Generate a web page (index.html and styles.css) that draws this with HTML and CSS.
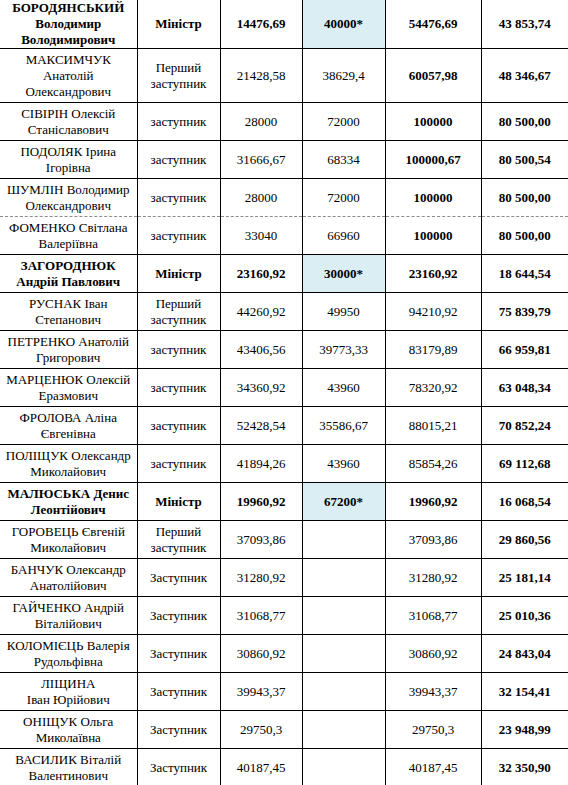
FILE: index.html
```html
<!DOCTYPE html>
<html lang="uk">
<head>
<meta charset="utf-8">
<title>Таблиця</title>
<link rel="stylesheet" href="styles.css">
</head>
<body class="page">
<table class="sal">
<colgroup>
<col class="c1"><col class="c2"><col class="c3"><col class="c4"><col class="c5"><col class="c6">
</colgroup>
<tbody>
<tr class="r-first min">
<td>БОРОДЯНСЬКИЙ Володимир Володимирович</td><td>Міністр</td><td>14476,69</td><td class="hl">40000*</td><td>54476,69</td><td>43 853,74</td>
</tr>
<tr class="r-tall">
<td>МАКСИМЧУК Анатолій Олександрович</td><td>Перший заступник</td><td>21428,58</td><td>38629,4</td><td class="b">60057,98</td><td>48 346,67</td>
</tr>
<tr>
<td>СІВІРІН Олексій Станіславович</td><td>заступник</td><td>28000</td><td>72000</td><td class="b">100000</td><td>80 500,00</td>
</tr>
<tr>
<td>ПОДОЛЯК Ірина Ігорівна</td><td>заступник</td><td>31666,67</td><td>68334</td><td class="b">100000,67</td><td>80 500,54</td>
</tr>
<tr class="dash">
<td>ШУМЛІН Володимир Олександрович</td><td>заступник</td><td>28000</td><td>72000</td><td class="b">100000</td><td>80 500,00</td>
</tr>
<tr class="after-dash">
<td>ФОМЕНКО Світлана Валеріївна</td><td>заступник</td><td>33040</td><td>66960</td><td class="b">100000</td><td>80 500,00</td>
</tr>
<tr class="min">
<td>ЗАГОРОДНЮК Андрій Павлович</td><td>Міністр</td><td>23160,92</td><td class="hl">30000*</td><td>23160,92</td><td>18 644,54</td>
</tr>
<tr>
<td>РУСНАК Іван Степанович</td><td>Перший заступник</td><td>44260,92</td><td>49950</td><td>94210,92</td><td>75 839,79</td>
</tr>
<tr>
<td>ПЕТРЕНКО Анатолій Григорович</td><td>заступник</td><td>43406,56</td><td>39773,33</td><td>83179,89</td><td>66 959,81</td>
</tr>
<tr>
<td>МАРЦЕНЮК Олексій Еразмович</td><td>заступник</td><td>34360,92</td><td>43960</td><td>78320,92</td><td>63 048,34</td>
</tr>
<tr>
<td>ФРОЛОВА Аліна Євгенівна</td><td>заступник</td><td>52428,54</td><td>35586,67</td><td>88015,21</td><td>70 852,24</td>
</tr>
<tr>
<td>ПОЛІЩУК Олександр Миколайович</td><td>заступник</td><td>41894,26</td><td>43960</td><td>85854,26</td><td>69 112,68</td>
</tr>
<tr class="min">
<td>МАЛЮСЬКА Денис Леонтійович</td><td>Міністр</td><td>19960,92</td><td class="hl">67200*</td><td>19960,92</td><td>16 068,54</td>
</tr>
<tr>
<td>ГОРОВЕЦЬ Євгеній Миколайович</td><td>Перший заступник</td><td>37093,86</td><td></td><td>37093,86</td><td>29 860,56</td>
</tr>
<tr>
<td>БАНЧУК Олександр Анатолійович</td><td>Заступник</td><td>31280,92</td><td></td><td>31280,92</td><td>25 181,14</td>
</tr>
<tr>
<td>ГАЙЧЕНКО Андрій Віталійович</td><td>Заступник</td><td>31068,77</td><td></td><td>31068,77</td><td>25 010,36</td>
</tr>
<tr>
<td>КОЛОМІЄЦЬ Валерія Рудольфівна</td><td>Заступник</td><td>30860,92</td><td></td><td>30860,92</td><td>24 843,04</td>
</tr>
<tr>
<td>ЛІЩИНА<br>Іван Юрійович</td><td>Заступник</td><td>39943,37</td><td></td><td>39943,37</td><td>32 154,41</td>
</tr>
<tr>
<td>ОНІЩУК Ольга Миколаївна</td><td>Заступник</td><td>29750,3</td><td></td><td>29750,3</td><td>23 948,99</td>
</tr>
<tr>
<td>ВАСИЛИК Віталій Валентинович</td><td>Заступник</td><td>40187,45</td><td></td><td>40187,45</td><td>32 350,90</td>
</tr>
</tbody>
</table>
</body>
</html>
```

FILE: styles.css
```css
html, body {
  margin: 0;
  padding: 0;
  background: #ffffff;
}

.page {
  font-family: "Liberation Serif", serif;
}

.sal {
  width: 568px;
  border-collapse: collapse;
  table-layout: fixed;
  color: #000;
  font-family: "Liberation Serif", serif;
}

.sal td {
  font-family: "Liberation Serif", serif;
  font-size: 13px;
  line-height: 16px;
  border: 1px solid #000;
  text-align: center;
  vertical-align: middle;
  padding: 0 4px;
  height: 38px;
  box-sizing: border-box;
}

.c1 { width: 137px; }
.c2 { width: 83px; }
.c3 { width: 82px; }
.c4 { width: 83px; }
.c5 { width: 96px; }
.c6 { width: 87px; }

.sal td:first-child { border-left: none; }
.sal td:last-child { border-right: none; font-weight: bold; }

.sal .r-first td {
  border-top: none;
  height: 48px;
}

.sal .r-tall td {
  height: 54px;
}

.sal .min td { font-weight: bold; }

.sal td.b { font-weight: bold; }

.sal td.hl { background: #daeef3; }

.sal .dash td { border-bottom: 1px dashed #8c8c8c; }
.sal .after-dash td { border-top: 1px dashed #8c8c8c; }
```
